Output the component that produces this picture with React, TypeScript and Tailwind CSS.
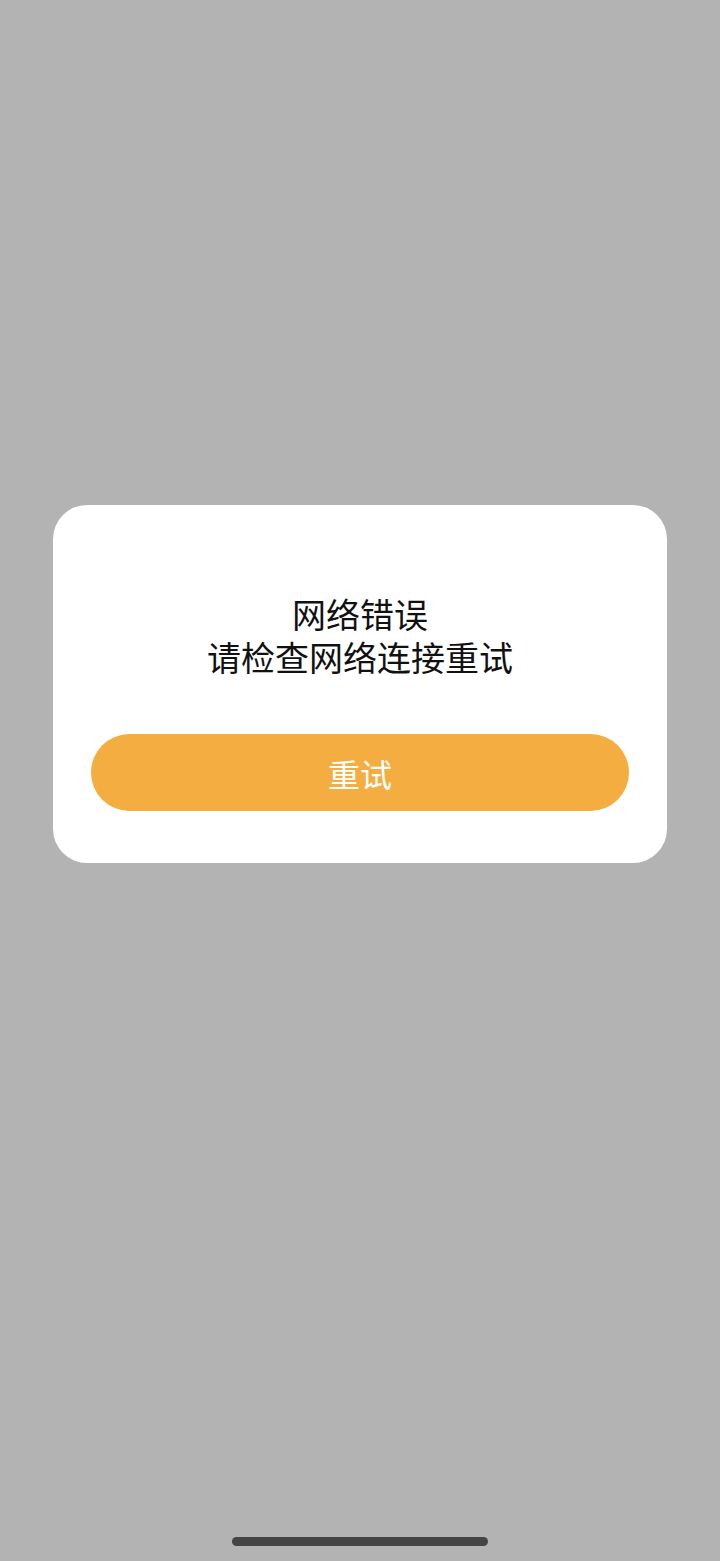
export default function App() {
  return (
    <div className="relative flex min-h-[1561px] w-full flex-col items-center bg-[#b3b3b3] pt-[505px] font-['Noto_Sans_CJK_SC',sans-serif]">
      <div className="flex w-[614px] flex-col rounded-[34px] bg-white px-[38px] pt-[87px] pb-[52px]">
        <p className="text-center text-[34px] leading-[43px] text-[#111]">
          网络错误
          <br />
          请检查网络连接重试
        </p>
        <button className="mt-[56px] h-[77px] w-full rounded-full bg-[#f3ad40] text-[32px] text-white">
          重试
        </button>
      </div>
      <div className="absolute bottom-[15px] left-[232px] h-[9px] w-[256px] rounded-full bg-[#444]" />
    </div>
  )
}
